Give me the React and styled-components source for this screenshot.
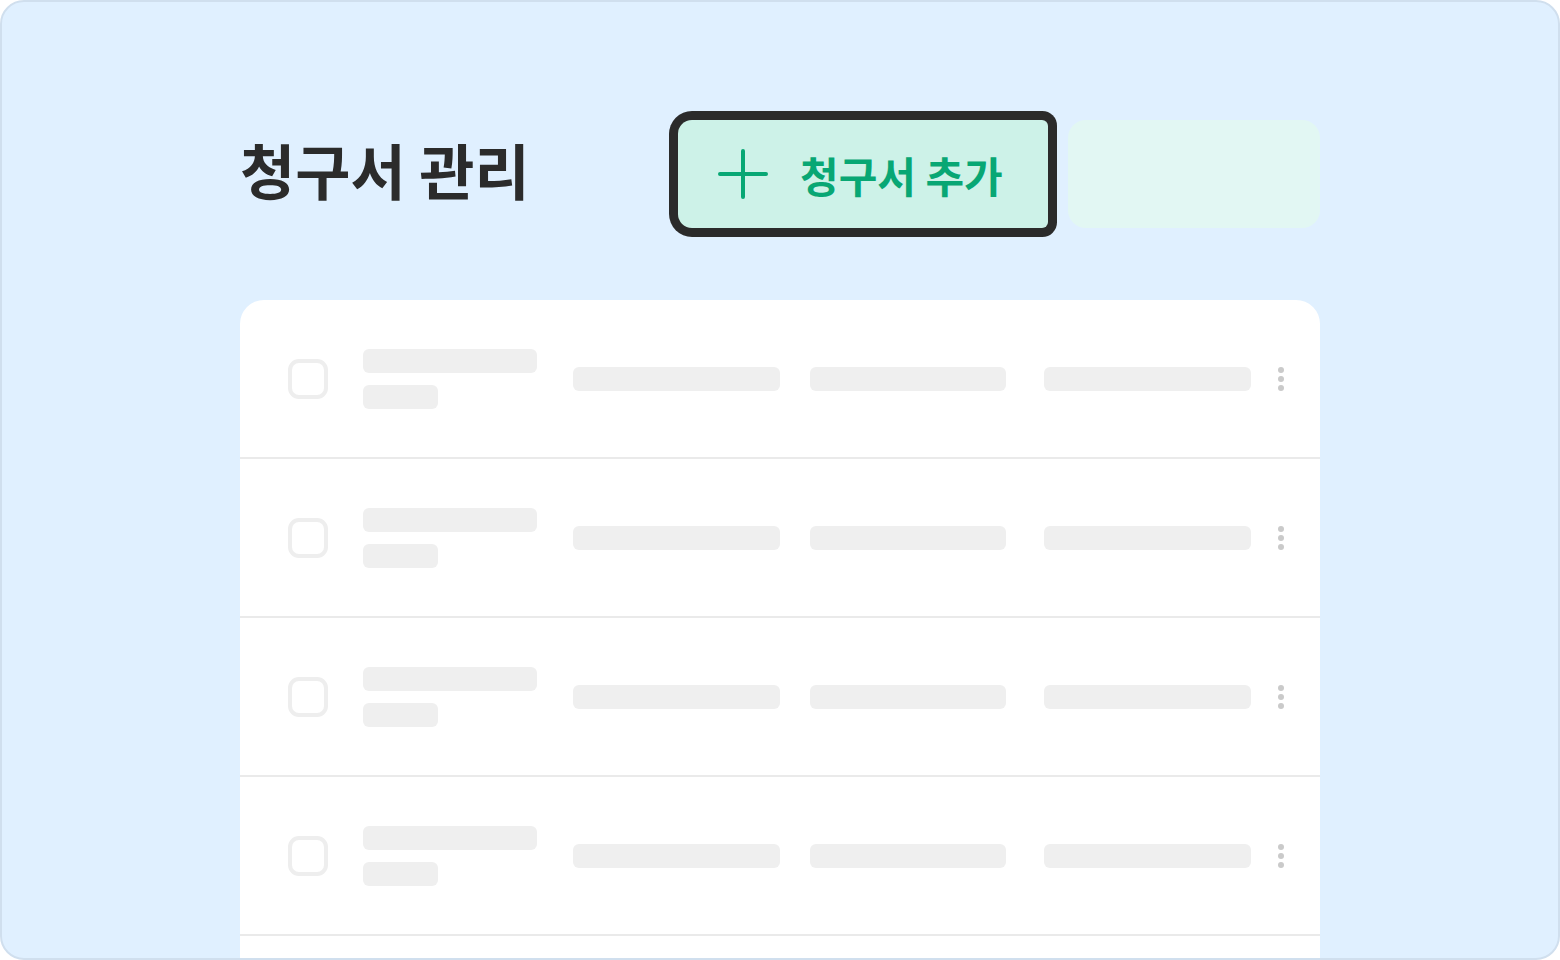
import styled, { createGlobalStyle } from "styled-components";

const rows = [0, 1, 2, 3, 4];

export default function App() {
  return <>
    <GlobalStyle />
    <Frame>
      <Content>
        <Header>
          <Title>청구서 관리</Title>
          <AddButton>
            <PlusIcon />
            <span>청구서 추가</span>
          </AddButton>
          <GhostBox />
        </Header>
        <Card>
          {rows.map(i => (
            <Row key={i}>
              <Checkbox />
              <Stack>
                <Bar $w={174} />
                <Bar $w={75} />
              </Stack>
              <Bar $w={207} />
              <Bar $w={196} />
              <Bar $w={207} />
              <Dots>
                <Dot />
                <Dot />
                <Dot />
              </Dots>
            </Row>
          ))}
        </Card>
      </Content>
    </Frame>
  </>
}

const PlusIcon = () => (
  <svg width="50" height="50" viewBox="0 0 50 50" fill="none">
    <path d="M25 2v46M2 25h46" stroke="#08a774" strokeWidth="4" strokeLinecap="round" />
  </svg>
);

const GlobalStyle = createGlobalStyle`
  body {
    margin: 0;
    font-family: "Noto Sans CJK KR", "Noto Sans", sans-serif;
  }
`;

const Frame = styled.div`
  width: 1560px;
  height: 960px;
  box-sizing: border-box;
  border: 2px solid #d0dfee;
  border-radius: 24px;
  background: #e0f0ff;
  overflow: hidden;
`;

const Content = styled.div`
  width: 1080px;
  margin: 0 auto;
  padding-top: 118px;
`;

const Header = styled.div`
  display: flex;
  align-items: center;
  gap: 20px;
  height: 108px;
`;

const Title = styled.h1`
  flex: 1;
  margin: -12px 0 0;
  font-size: 60px;
  font-weight: 700;
  color: #2b2b2b;
`;

const AddButton = styled.button`
  width: 370px;
  height: 108px;
  box-sizing: border-box;
  display: flex;
  align-items: center;
  gap: 32px;
  padding: 0 0 0 40px;
  border: none;
  border-radius: 14px 6px 6px 14px;
  background: #cdf2e8;
  box-shadow: 0 0 0 9px #2b2b2b;
  color: #08a774;
  font-family: inherit;
  font-size: 42px;
  font-weight: 700;
`;

const GhostBox = styled.div`
  width: 252px;
  height: 108px;
  border-radius: 18px;
  background: #e2f7f3;
`;

const Card = styled.div`
  margin-top: 72px;
  background: #ffffff;
  border-radius: 24px 24px 0 0;
`;

const Row = styled.div`
  display: grid;
  grid-template-columns: 75px 210px 237px 234px 234px 6px;
  align-items: center;
  height: 157px;
  padding-left: 48px;
  border-bottom: 2px solid #eaeaea;
`;

const Checkbox = styled.div`
  width: 40px;
  height: 40px;
  box-sizing: border-box;
  border: 4px solid #eeeeee;
  border-radius: 11px;
`;

const Stack = styled.div`
  display: flex;
  flex-direction: column;
  gap: 12px;
`;

const Bar = styled.div`
  width: ${p => p.$w}px;
  height: 24px;
  border-radius: 6px;
  background: #efefef;
`;

const Dots = styled.div`
  display: flex;
  flex-direction: column;
  gap: 3px;
`;

const Dot = styled.div`
  width: 6px;
  height: 6px;
  border-radius: 50%;
  background: #cacaca;
`;
